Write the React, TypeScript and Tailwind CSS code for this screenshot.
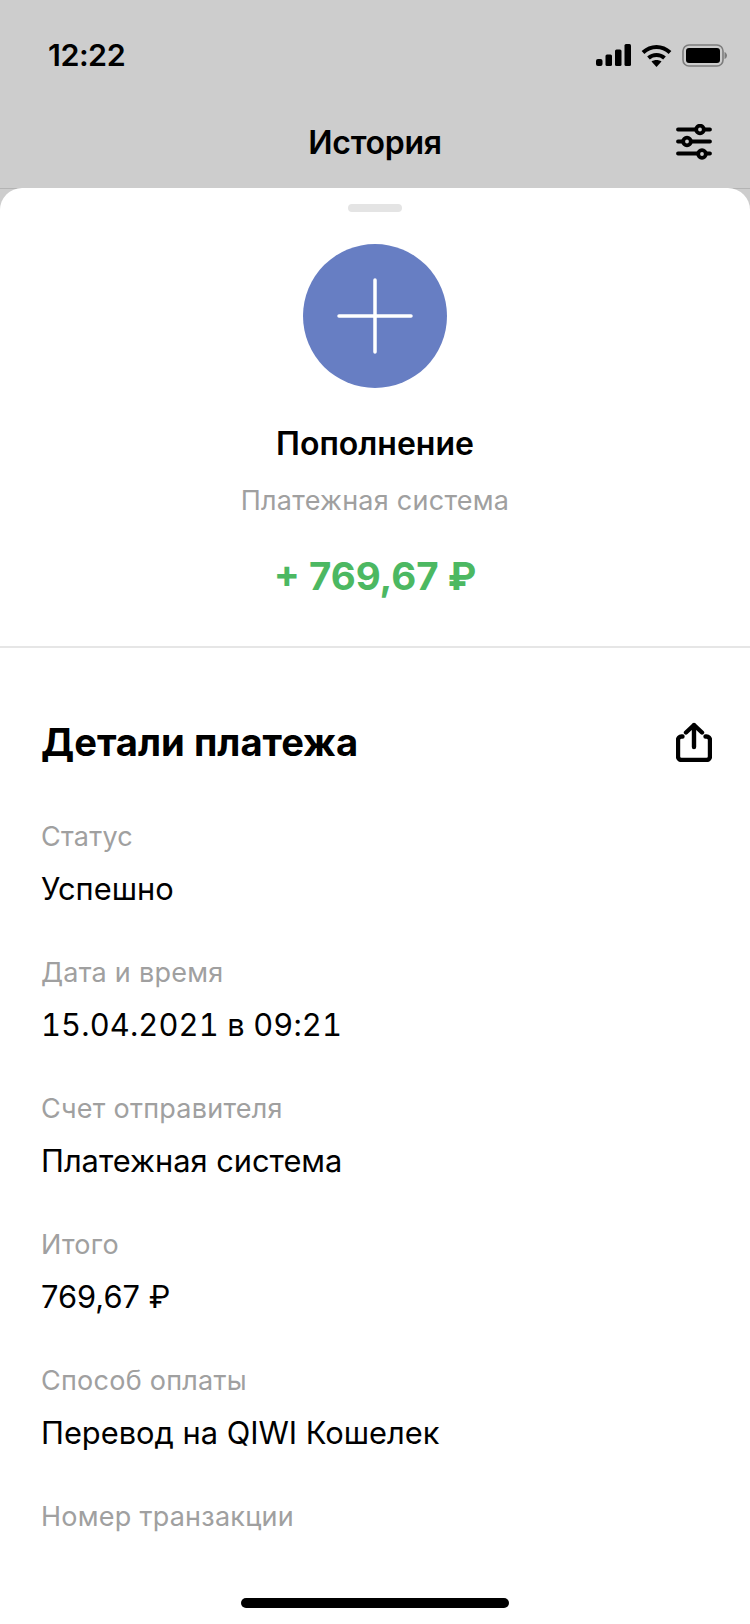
const details = [
  { label: "Статус", value: "Успешно" },
  { label: "Дата и время", value: "15.04.2021 в 09:21", numeric: true },
  { label: "Счет отправителя", value: "Платежная система" },
  { label: "Итого", value: "769,67 ₽" },
  { label: "Способ оплаты", value: "Перевод на QIWI Кошелек" },
  { label: "Номер транзакции", value: "" },
];

function StatusIcons() {
  return (
    <div className="flex items-center gap-[10px]">
      <svg width="35" height="22" viewBox="0 0 35 22" fill="#000">
        <rect x="0" y="15" width="6.5" height="7" rx="2" />
        <rect x="9.5" y="10.5" width="6.5" height="11.5" rx="1.5" />
        <rect x="19" y="5.5" width="6.5" height="16.5" rx="1.5" />
        <rect x="28.5" y="0" width="6.5" height="22" rx="1.5" />
      </svg>
      <svg width="31" height="23" viewBox="0 0 31 23" fill="none" stroke="#000" strokeWidth="4">
        <path d="M2 8.5 C10 1 21 1 29 8.5" />
        <path d="M7.5 14 C12 10 19 10 23.5 14" />
        <path d="M15.5 23 L10.5 17.5 C13.5 15.5 17.5 15.5 20.5 17.5 Z" fill="#000" stroke="none" />
      </svg>
      <svg width="45" height="23" viewBox="0 0 45 23" fill="none">
        <rect x="1" y="1" width="40" height="21" rx="6" stroke="#7d7d7d" strokeWidth="1.6" />
        <rect x="4" y="4" width="34" height="15" rx="3" fill="#000" />
        <path d="M42.5 8 C44 8.5 45 10 45 11.5 C45 13 44 14.5 42.5 15 Z" fill="#7d7d7d" />
      </svg>
    </div>
  );
}

function FilterIcon() {
  return (
    <svg width="36" height="36" viewBox="0 0 36 36" fill="none" stroke="#000" strokeWidth="3.8" strokeLinecap="round">
      <path d="M2 5.5 H34 M2 17.5 H34 M2 29.5 H34" />
      <circle cx="24" cy="5.5" r="3.8" fill="#cdcdcd" />
      <circle cx="11" cy="17.5" r="3.8" fill="#cdcdcd" />
      <circle cx="26" cy="30" r="3.8" fill="#cdcdcd" />
    </svg>
  );
}

function ShareIcon() {
  return (
    <svg width="36" height="40" viewBox="0 0 36 40" fill="none" stroke="#000" strokeWidth="4.4" strokeLinecap="round" strokeLinejoin="round">
      <path d="M18 25 V3 M10 10.5 L18 3 L26 10.5" />
      <path d="M6.5 14.5 H5.5 C3.5 14.5 2 16 2 18 V34.5 C2 36.5 3.5 38 5.5 38 H30.5 C32.5 38 34 36.5 34 34.5 V18 C34 16 32.5 14.5 30.5 14.5 H29.5" />
    </svg>
  );
}

export default function App() {
  return (
    <div className="relative h-[1624px] w-[750px] overflow-hidden bg-[#cdcdcd] font-['Inter',sans-serif] text-black">
      <header className="h-[189px] border-b border-[#b4b4b4]">
        <div className="flex items-center justify-between pl-[48px] pr-[23px] pt-[37px]">
          <span className="text-[30.5px] font-semibold leading-[36px] tracking-[-0.5px]">12:22</span>
          <StatusIcons />
        </div>
        <div className="relative mt-[45px] flex h-[50px] items-center justify-center">
          <h1 className="text-[32px] font-semibold leading-[40px] tracking-[-0.3px]">История</h1>
          <div className="absolute right-[38px] top-[6px]">
            <FilterIcon />
          </div>
        </div>
      </header>

      <main className="-mt-px h-[1436px] rounded-t-[22px] bg-white">
        <section className="flex h-[460px] flex-col items-center border-b-2 border-[#e6e6e6] pt-[16px]">
          <div className="h-[8px] w-[54px] rounded-full bg-[#e4e4e4]" />
          <div className="mt-[32px] flex h-[144px] w-[144px] items-center justify-center rounded-full bg-[#677ec3]">
            <svg width="76" height="76" viewBox="0 0 76 76" stroke="#fff" strokeWidth="3.5" strokeLinecap="round">
              <path d="M38 2 V74 M2 38 H74" />
            </svg>
          </div>
          <p className="mt-[36px] text-[32px] font-semibold leading-[40px]">Пополнение</p>
          <p className="mt-[19px] text-[27px] leading-[36px] tracking-[0.25px] text-[#a0a0a0]">Платежная система</p>
          <p className="mt-[32px] text-[38.5px] font-bold leading-[50px] text-[#4cb862]">+ 769,67 ₽</p>
        </section>

        <section className="pl-[41px] pr-[38px]">
          <div className="flex items-center justify-between pt-[69px]">
            <h2 className="text-[38.2px] font-bold leading-[50px]">Детали платежа</h2>
            <ShareIcon />
          </div>
          <dl className="mt-[52px] flex flex-col gap-[48px]">
            {details.map((row) => (
              <div key={row.label}>
                <dt className="text-[27px] leading-[36px] tracking-[0.25px] text-[#a0a0a0]">{row.label}</dt>
                {row.value && (
                  <dd className={row.numeric ? "mt-[16px] text-[30.8px] leading-[36px] tabular-nums tracking-[0.15px]" : "mt-[16px] text-[30.8px] leading-[36px]"}>
                    {row.value}
                  </dd>
                )}
              </div>
            ))}
          </dl>
        </section>
      </main>

      <div className="absolute bottom-[16px] left-[241px] h-[10px] w-[268px] rounded-full bg-black" />
    </div>
  );
}
